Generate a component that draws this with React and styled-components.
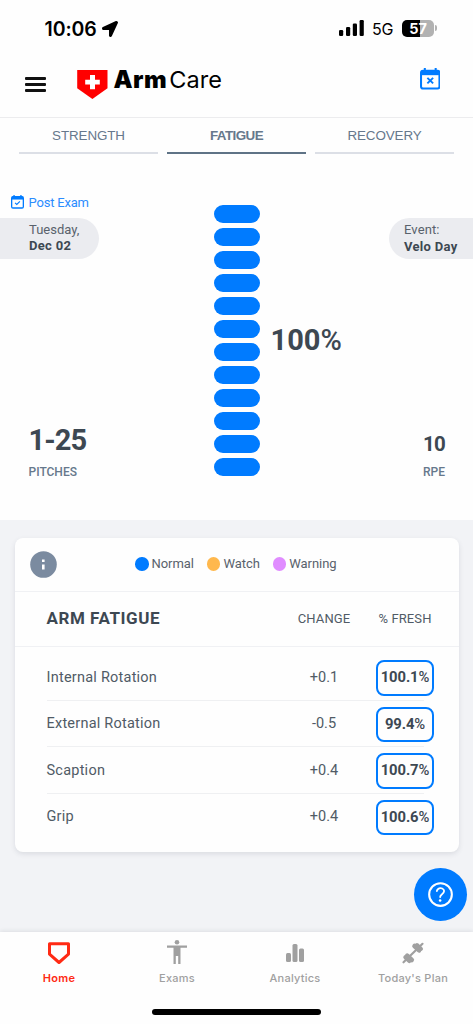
import React from "react";
import styled, { createGlobalStyle } from "styled-components";
import { FaLocationArrow } from "react-icons/fa";
import { IoHelpCircleOutline } from "react-icons/io5";

const Global = createGlobalStyle`
  *, *::before, *::after { box-sizing: border-box; }
  body { margin: 0; background: #fefefe; }
`;

const blue = "#007bff";
const ink = "#3d4852";
const slate = "#66788c";

const Screen = styled.div`
  width: 473px;
  height: 1024px;
  display: flex;
  flex-direction: column;
  overflow: hidden;
  background: #fefefe;
  color: ${ink};
  font-family: Roboto, sans-serif;
`;

const Label = styled.span`
  display: block;
  white-space: nowrap;
  font-size: ${(p) => p.$size}px;
  line-height: ${(p) => p.$line || p.$size}px;
  font-weight: ${(p) => p.$weight || 400};
  color: ${(p) => p.$color || ink};
  letter-spacing: ${(p) => p.$track || 0}px;
`;

const StatusBar = styled.div`
  height: 56px;
  padding: 0 36px 0 44.5px;
  display: flex;
  justify-content: space-between;
  font-family: Inter, sans-serif;
  color: #000;
`;

const Clock = styled.div`
  display: flex;
  align-items: center;
  gap: 5px;
  height: 57px;
  font-size: 19.5px;
  font-weight: 600;
  letter-spacing: -0.1px;
`;

const Signals = styled.div`
  display: flex;
  align-items: center;
  height: 56px;
  font-size: 16px;
  letter-spacing: -0.2px;
`;

const Network = styled.span`
  width: 22px;
  margin: 1px 8px 0 8px;
`;

const Battery = styled.div`
  width: 32px;
  height: 17px;
  border-radius: 5px;
  background: linear-gradient(90deg, #000 0 57%, #b2b2b2 57%);
  color: #fff;
  font-size: 14.5px;
  font-weight: 700;
  line-height: 17px;
  text-align: center;
`;

const BatteryTip = styled.div`
  width: 2px;
  height: 6px;
  margin-left: 1px;
  border-radius: 0 2px 2px 0;
  background: #b2b2b2;
`;

const Header = styled.header`
  height: 62px;
  padding: 0 33px 0 25px;
  display: flex;
  align-items: flex-start;
  border-bottom: 1px solid #ececee;
`;

const MenuButton = styled.div`
  width: 21px;
  margin-top: 21px;
  display: flex;
  flex-direction: column;
  gap: 3.5px;
`;

const MenuLine = styled.div`
  height: 2.5px;
  border-radius: 1px;
  background: #111;
`;

const Brand = styled.div`
  display: flex;
  flex: 1;
  gap: 5.5px;
  margin: 14px 0 0 31px;
`;

const Wordmark = styled.div`
  display: flex;
  margin-top: -5px;
  font: 400 23.5px/29px Inter, sans-serif;
  letter-spacing: 0.1px;
  color: #000;
`;

const WordmarkBold = styled.span`
  font-weight: 900;
  font-size: 24px;
  margin-right: 2px;
  letter-spacing: 0.5px;
`;

const HeaderAction = styled.div`
  margin-top: 12px;
  height: 22px;
`;

const Tabs = styled.nav`
  display: grid;
  grid-template-columns: repeat(3, 139px);
  gap: 9px;
  padding-left: 19px;
  height: 36px;
`;

const Tab = styled.div`
  height: 36px;
  border-bottom: 2px solid ${(p) => (p.$active ? "#5f7386" : "#dcdfe6")};
  color: ${slate};
  font: ${(p) => (p.$active ? 700 : 400)} 13.4px/35px "Liberation Sans", sans-serif;
  letter-spacing: ${(p) => (p.$active ? -0.55 : -0.1)}px;
  text-align: center;
`;

const Gauge = styled.section`
  height: 366px;
  display: grid;
  grid-template-columns: 214px 1fr 84px;
  padding-top: 41px;
`;

const GaugeSide = styled.div`
  display: flex;
  flex-direction: column;
`;

const ExamLink = styled.div`
  display: flex;
  align-items: center;
  gap: 4.5px;
  height: 14px;
  padding-left: 11px;
`;

const Flag = styled.div`
  width: ${(p) => (p.$right ? 84 : 99)}px;
  height: 41px;
  margin-top: ${(p) => (p.$right ? 22.5 : 8.5)}px;
  padding: ${(p) => (p.$right ? "3px 0 0 15px" : "4px 0 0 29px")};
  border-radius: ${(p) => (p.$right ? "21px 0 0 21px" : "0 21px 21px 0")};
  background: #ebecf0;
`;

const Metric = styled.div`
  display: flex;
  flex-direction: column;
  gap: ${(p) => p.$gap}px;
  align-items: ${(p) => (p.$right ? "flex-end" : "flex-start")};
  margin: auto 0 42px;
  padding: ${(p) => (p.$right ? "0 28px 0 0" : "0 0 0 28.5px")};
`;

const GaugeCenter = styled.div`
  display: flex;
  align-items: center;
  gap: 11px;
  height: 271px;
  margin-top: 10px;
`;

const Stack = styled.div`
  display: flex;
  flex-direction: column;
  gap: 5px;
`;

const Segment = styled.div`
  width: 45.5px;
  height: 18px;
  border-radius: 9px;
  background: ${blue};
`;

const Content = styled.main`
  flex: 1;
  padding: 17.5px 14px 0 15px;
  background: #f2f3f6;
`;

const Card = styled.section`
  height: 314px;
  border-radius: 8px;
  background: #fefefe;
  box-shadow: 0 2px 5px rgba(60, 70, 90, 0.13);
`;

const Legend = styled.div`
  display: flex;
  align-items: center;
  height: 54px;
  padding-left: 15px;
  border-bottom: 1.5px solid #f0f1f4;
`;

const LegendItems = styled.div`
  display: flex;
  gap: 13px;
  margin-left: 78px;
`;

const LegendItem = styled.div`
  display: flex;
  align-items: center;
  gap: 3px;
`;

const Dot = styled.div`
  width: 13.5px;
  height: 13.5px;
  border-radius: 50%;
  background: ${(p) => p.$color};
`;

const columns = `
  display: grid;
  grid-template-columns: 1fr 70px 58px;
  column-gap: 17px;
  align-items: center;
  justify-items: center;
`;

const TableHead = styled.div`
  ${columns}
  height: 55px;
  padding: 0 25px 0 31.5px;
  border-bottom: 1.5px solid #f0f1f4;
`;

const Start = styled.div`
  justify-self: start;
`;

const Rows = styled.div`
  padding: 7.5px 35px 0 31.5px;
`;

const Row = styled.div`
  height: 46.5px;
  padding-top: 2px;
  border-bottom: 1px solid ${(p) => (p.$last ? "transparent" : "#eff0f2")};
`;

const RowCells = styled.div`
  ${columns}
  width: calc(100% + 10px);
  height: 43.5px;
`;

const Badge = styled.div`
  width: 58.5px;
  height: 35.5px;
  display: flex;
  align-items: center;
  justify-content: center;
  border: 2px solid ${blue};
  border-radius: 8px;
`;

const Percent = styled.span`
  font-weight: 500;
`;

const HelpButton = styled.div`
  position: absolute;
  left: 414px;
  top: 868px;
  width: 53px;
  height: 53px;
  display: flex;
  align-items: center;
  justify-content: center;
  border-radius: 50%;
  background: ${blue};
  color: #fff;
`;

const BottomNav = styled.nav`
  height: 92px;
  display: flex;
  flex-direction: column;
  align-items: center;
  justify-content: space-between;
  background: #fefefe;
  box-shadow: 0 -1px 4px rgba(40, 45, 60, 0.1);
`;

const NavItems = styled.div`
  align-self: flex-start;
  display: grid;
  grid-template-columns: repeat(4, 118px);
  padding-top: 7px;
`;

const NavItem = styled.div`
  display: flex;
  flex-direction: column;
  align-items: center;
  gap: 6px;
  color: ${(p) => (p.$active ? "#ff2a14" : "#a0a0a0")};
  font: ${(p) => (p.$active ? 600 : 500)} 11px/14px Inter, sans-serif;
  letter-spacing: 0.25px;
`;

const HomeIndicator = styled.div`
  width: 169px;
  height: 6px;
  margin-bottom: 9px;
  border-radius: 3px;
  background: #000;
`;

const SignalBars = () => (
  <svg width="25" height="16" viewBox="0 0 25 16">
    <rect x="0" y="10" width="4.2" height="6" rx="1.2" />
    <rect x="7" y="7" width="4.2" height="9" rx="1.2" />
    <rect x="13.8" y="3.5" width="4.2" height="12.5" rx="1.2" />
    <rect x="20.6" y="0" width="4.2" height="16" rx="1.2" />
  </svg>
);

const Shield = () => (
  <svg width="31" height="29" viewBox="0 0 31 29">
    <path d="M.2 0h30.3v18.2L15.4 29 .2 18.2Z" fill="#ff0000" />
    <path d="M13 5h5v4.8h4.8v4.7H18v4.8h-5v-4.8H8.2V9.800H13Z" fill="#fff" />
  </svg>
);

const Calendar = ({ size, busy }) => (
  <svg width={size} height={size * 1.05} viewBox="0 0 20 21" fill={blue} stroke={blue}>
    <path d="M3 2.600h14q2 0 2 2V18q0 2-2 2H3q-2 0-2-2V4.600q0-2 2-2Z" fill="none" strokeWidth="2" />
    <path d="M1.500 2.500h17v4.500h-17z" stroke="none" />
    <path d="M4.700 0v3M15.300 0v3" strokeWidth="2" />
    {busy ? (
      <path d="m7.200 9.600 5.600 5.400m0-5.400L7.200 15" fill="none" strokeWidth="1.900" />
    ) : (
      <path d="m6.300 12 2.600 2.500 4.800-4.800" fill="none" strokeWidth="1.700" />
    )}
  </svg>
);

const Info = () => (
  <svg width="27" height="27" viewBox="0 0 27 27">
    <circle cx="13.500" cy="13.500" r="13.300" fill="#7b8ba0" />
    <path d="M12 8.500h2.600v2.400H12zM12 13.500h2.600v5H12z" fill="#fff" />
  </svg>
);

const HomeIcon = () => (
  <svg width="24" height="26" viewBox="0 0 24 26" fill="none" stroke="#ff2a14" strokeWidth="3" strokeLinejoin="round">
    <path d="M2.500 4.700h19v10.500L12 23.500l-9.500-8.300Z" />
  </svg>
);

const PersonIcon = () => (
  <svg width="24" height="26" viewBox="0 0 24 26" fill="currentColor">
    <circle cx="12" cy="3.200" r="2.300" />
    <path d="M2 6.500h20v2.200h-6.500V25h-2.300v-8h-2.400v8H8.500V8.700H2Z" />
  </svg>
);

const ChartIcon = () => (
  <svg width="24" height="26" viewBox="0 0 24 26" fill="currentColor">
    <rect x="3" y="14" width="5" height="9" rx="1.500" />
    <rect x="9.500" y="5" width="5" height="18" rx="1.500" />
    <rect x="16" y="9.500" width="5" height="13.500" rx="1.500" />
  </svg>
);

const DumbbellIcon = () => (
  <svg width="24" height="26" viewBox="0 0 24 26" fill="none" stroke="currentColor" strokeLinecap="round">
    <path d="M2.500 23.300 21.500 4.800" strokeWidth="2.200" />
    <path d="m6.200 16.600 4.600 4.400M13.500 7l4.600 4.400" strokeWidth="4.600" />
    <path d="m4.300 18.200 4 3.900M16 6l4 3.900" strokeWidth="4" />
  </svg>
);

const rows = [
  ["Internal Rotation", "+0.1", "100.1"],
  ["External Rotation", "-0.5", "99.4"],
  ["Scaption", "+0.4", "100.7"],
  ["Grip", "+0.4", "100.6"],
];

const legend = [
  ["Normal", blue],
  ["Watch", "#ffb84d"],
  ["Warning", "#e08cff"],
];

export default function App() {
  return (
    <Screen>
      <Global />
      <StatusBar>
        <Clock>
          10:06
          <FaLocationArrow size={16} />
        </Clock>
        <Signals>
          <SignalBars />
          <Network>5G</Network>
          <Battery>57</Battery>
          <BatteryTip />
        </Signals>
      </StatusBar>
      <Header>
        <MenuButton>
          <MenuLine />
          <MenuLine />
          <MenuLine />
        </MenuButton>
        <Brand>
          <Shield />
          <Wordmark>
            <WordmarkBold>Arm</WordmarkBold>Care
          </Wordmark>
        </Brand>
        <HeaderAction>
          <Calendar size={20.5} busy />
        </HeaderAction>
      </Header>
      <Tabs>
        <Tab>STRENGTH</Tab>
        <Tab $active>FATIGUE</Tab>
        <Tab>RECOVERY</Tab>
      </Tabs>
      <Gauge>
        <GaugeSide>
          <ExamLink>
            <Calendar size={13} />
            <Label $size={13} $color="#2b8cff" $track={-0.2}>Post Exam</Label>
          </ExamLink>
          <Flag>
            <Label $size={13} $line={16} $color="#59626c">Tuesday,</Label>
            <Label $size={13} $line={16} $weight={700} $track={0.3}>Dec 02</Label>
          </Flag>
          <Metric $gap={11}>
            <Label $size={29} $weight={700} $track={-0.9}>1-25</Label>
            <Label $size={12} $weight={500} $color={slate}>PITCHES</Label>
          </Metric>
        </GaugeSide>
        <GaugeCenter>
          <Stack>
            {Array.from({ length: 12 }, (_, i) => (
              <Segment key={i} />
            ))}
          </Stack>
          <Label $size={29} $weight={700}>
            100<Percent>%</Percent>
          </Label>
        </GaugeCenter>
        <GaugeSide>
          <Flag $right>
            <Label $size={13} $line={17} $color="#59626c" $track={0.1}>Event:</Label>
            <Label $size={13} $line={18} $weight={700} $track={0.3}>Velo Day</Label>
          </Flag>
          <Metric $right $gap={12}>
            <Label $size={20.5} $weight={700} $track={-0.8}>10</Label>
            <Label $size={12} $weight={500} $color={slate}>RPE</Label>
          </Metric>
        </GaugeSide>
      </Gauge>
      <Content>
        <Card>
          <Legend>
            <Info />
            <LegendItems>
              {legend.map(([name, color]) => (
                <LegendItem key={name}>
                  <Dot $color={color} />
                  <Label $size={13} $line={16} $color="#59626c" $track={-0.05}>{name}</Label>
                </LegendItem>
              ))}
            </LegendItems>
          </Legend>
          <TableHead>
            <Start>
              <Label $size={17} $weight={700} $track={0.55}>ARM FATIGUE</Label>
            </Start>
            <Label $size={13} $color="#505b66" $track={0.1}>CHANGE</Label>
            <Label $size={13} $color="#505b66" $track={0.1}>% FRESH</Label>
          </TableHead>
          <Rows>
            {rows.map(([name, change, fresh], i) => (
              <Row key={name} $last={i === rows.length - 1}>
                <RowCells>
                  <Start>
                    <Label $size={14.5} $color="#505b66" $track={0.23}>{name}</Label>
                  </Start>
                  <Label $size={14.5} $color="#505b66">{change}</Label>
                  <Badge>
                    <Label $size={14.8} $weight={700} $track={-0.1}>
                      {fresh}
                      <Percent>%</Percent>
                    </Label>
                  </Badge>
                </RowCells>
              </Row>
            ))}
          </Rows>
        </Card>
      </Content>
      <BottomNav>
        <NavItems>
          <NavItem $active>
            <HomeIcon />
            Home
          </NavItem>
          <NavItem>
            <PersonIcon />
            Exams
          </NavItem>
          <NavItem>
            <ChartIcon />
            Analytics
          </NavItem>
          <NavItem>
            <DumbbellIcon />
            Today's Plan
          </NavItem>
        </NavItems>
        <HomeIndicator />
      </BottomNav>
      <HelpButton>
        <IoHelpCircleOutline size={33} />
      </HelpButton>
    </Screen>
  );
}
